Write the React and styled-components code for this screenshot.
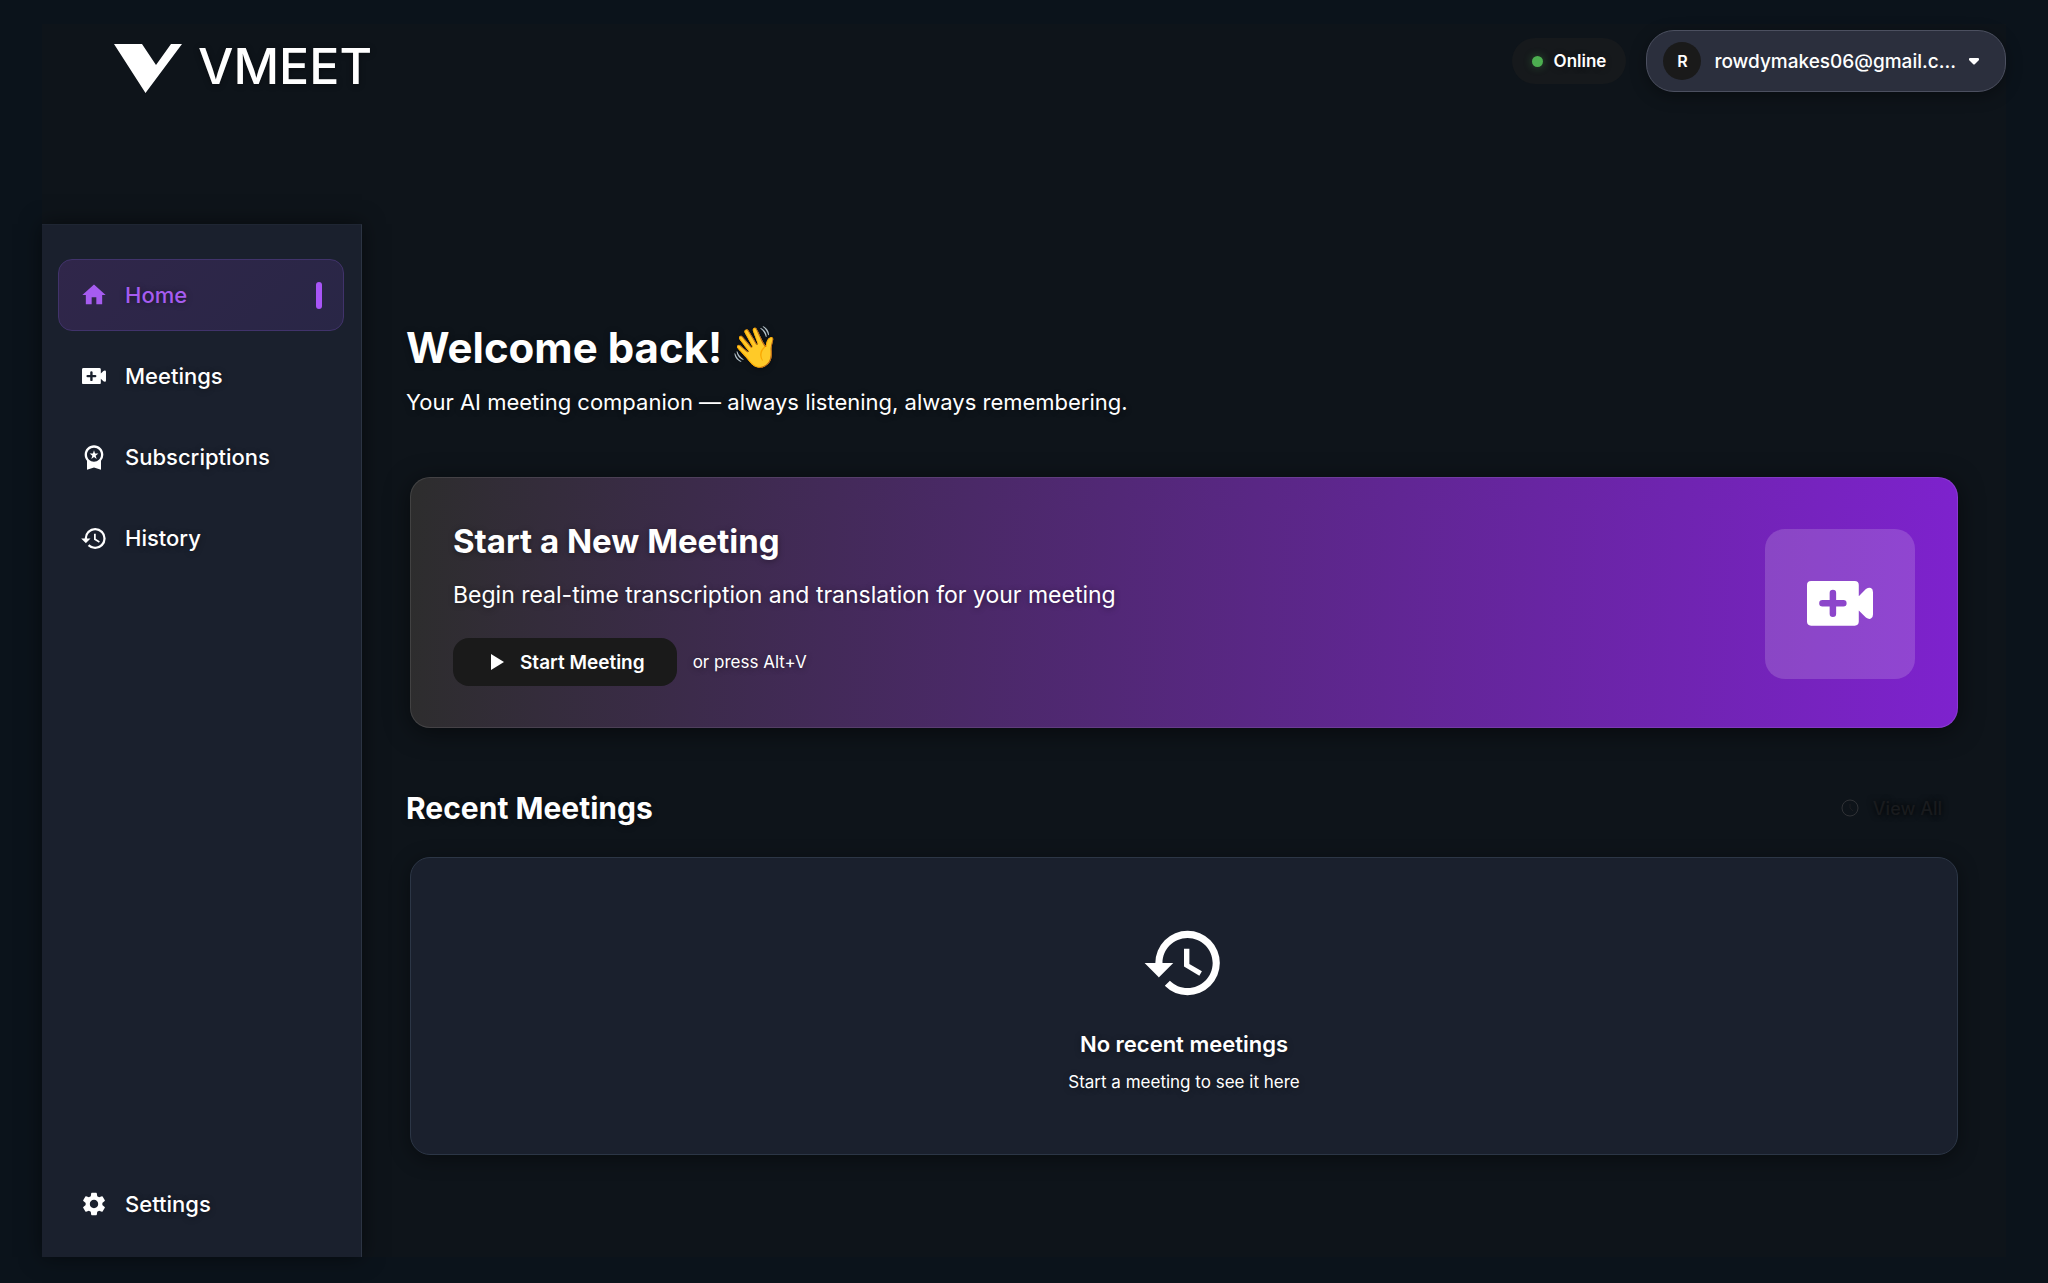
import React from "react";
import styled, { createGlobalStyle, css } from "styled-components";
import { MdHistory, MdHome, MdSettings, MdWorkspacePremium } from "react-icons/md";

const GlobalStyle = createGlobalStyle`
    * {
        box-sizing: border-box;
    }

    body {
        margin: 0;
        background: #0b131b;
        color: #ffffff;
        font-family: Inter, "Liberation Sans", sans-serif;
    }

    h1, h2, h3, p {
        margin: 0;
    }

    button {
        font-family: inherit;
        cursor: pointer;
    }
`;

const Page = styled.div`
    display: flex;
    min-height: 100vh;
    padding: 24px 42px 26px;
`;

const Shell = styled.div`
    display: flex;
    flex: 1;
    flex-direction: column;
    min-width: 0;
    background: #0e141a;
    text-shadow: 0 1px 6px rgba(0, 0, 0, 0.4);
`;

const Header = styled.header`
    display: flex;
    align-items: flex-start;
    justify-content: space-between;
    min-height: 200px;
    padding: 6px 0 0 72px;
`;

const Logo = styled.a`
    display: flex;
    align-items: flex-start;
    gap: 16px;
    padding-top: 14px;
    color: #ffffff;
    font-size: 50px;
    font-weight: 500;
    line-height: 44px;
    text-decoration: none;
`;

const Account = styled.div`
    display: flex;
    align-items: center;
    gap: 20px;
`;

const Status = styled.div`
    display: flex;
    align-items: center;
    gap: 11px;
    height: 46px;
    padding: 0 20px;
    border-radius: 23px;
    background: #16191c;
    font-size: 17px;
    font-weight: 600;
`;

const StatusDot = styled.span`
    width: 11px;
    height: 11px;
    border-radius: 50%;
    background: #4caf50;
    box-shadow: 0 0 8px rgba(76, 175, 80, 0.4);
`;

const UserButton = styled.button`
    display: flex;
    align-items: center;
    gap: 13px;
    height: 62px;
    padding: 0 26px 0 16px;
    border: 1px solid #4c5060;
    border-radius: 28px;
    background: #2b2f3d;
    box-shadow: 0 4px 16px rgba(0, 0, 0, 0.35);
    color: #ffffff;
    font-size: 19px;
    font-weight: 500;
`;

const Avatar = styled.span`
    display: flex;
    align-items: center;
    justify-content: center;
    width: 38px;
    height: 38px;
    border-radius: 50%;
    background: #1a1a1a;
    font-size: 16px;
    font-weight: 600;
`;

const Body = styled.div`
    display: flex;
    flex: 1;
`;

const Sidebar = styled.nav`
    display: flex;
    flex-direction: column;
    flex: none;
    gap: 9px;
    width: 320px;
    padding: 34px 17px 17px 16px;
    border-top: 1px solid #1f2633;
    border-right: 1px solid #2c3443;
    background: #1a202d;
    box-shadow: 0 0 20px rgba(0, 0, 0, 0.5);
`;

const NavItem = styled.button`
    display: flex;
    align-items: center;
    gap: 17px;
    height: 72px;
    padding: 0 21px;
    border: 1px solid transparent;
    border-radius: 14px;
    background: transparent;
    color: #ffffff;
    font-size: 22px;
    font-weight: 500;
    text-align: left;
    text-shadow: inherit;

    ${({ $active }) => $active && css`
        border-color: #41336b;
        background: linear-gradient(135deg, #30264a, #292646);
        color: #a65cf0;
    `}

    ${({ $last }) => $last && css`
        margin-top: auto;
    `}
`;

const ActiveBar = styled.span`
    width: 6px;
    height: 27px;
    margin-left: auto;
    border-radius: 3px;
    background: #a855f7;
`;

const IconBox = styled.span`
    display: flex;
    align-items: center;
    justify-content: center;
    width: 28px;
`;

const Main = styled.main`
    flex: 1;
    min-width: 0;
    padding: 98px 44px 0;
`;

const Title = styled.h1`
    display: flex;
    align-items: center;
    gap: 8px;
    font-size: 42px;
    font-weight: 700;
    line-height: 52px;
`;

const Wave = styled.span`
    font-size: 40px;
    font-family: "Noto Color Emoji", sans-serif;
`;

const Lead = styled.p`
    margin-top: 12px;
    font-size: 22px;
    line-height: 32px;
`;

const Hero = styled.section`
    display: flex;
    align-items: center;
    justify-content: space-between;
    margin: 59px 4px 0;
    padding: 43px 42px 41px;
    border: 1px solid rgba(255, 255, 255, 0.1);
    border-radius: 20px;
    background: linear-gradient(92deg, #2d2d2d 0%, #7e22ce 100%) border-box;
    box-shadow: 0 4px 24px rgba(0, 0, 0, 0.5);
`;

const HeroTitle = styled.h2`
    font-size: 33px;
    font-weight: 700;
    line-height: 40px;
`;

const HeroText = styled.p`
    margin-top: 18px;
    font-size: 23px;
    line-height: 32px;
`;

const HeroActions = styled.div`
    display: flex;
    align-items: center;
    gap: 16px;
    margin-top: 27px;
    font-size: 17px;
`;

const StartButton = styled.button`
    display: flex;
    align-items: center;
    justify-content: center;
    gap: 16px;
    height: 48px;
    padding: 0 32px 0 38px;
    border: 0;
    border-radius: 16px;
    background: #1a1a1a;
    color: #ffffff;
    font-size: 19px;
    font-weight: 600;
`;

const HeroTile = styled.div`
    display: flex;
    align-items: center;
    justify-content: center;
    width: 150px;
    height: 150px;
    border-radius: 20px;
    background: rgba(255, 255, 255, 0.16);
`;

const SectionHeader = styled.div`
    display: flex;
    align-items: center;
    justify-content: space-between;
    margin-top: 60px;
    padding-right: 20px;
`;

const SectionTitle = styled.h2`
    font-size: 30px;
    font-weight: 700;
    line-height: 40px;
`;

const ViewAll = styled.button`
    display: flex;
    align-items: center;
    gap: 14px;
    padding: 0;
    border: 0;
    background: transparent;
    color: #191b1e;
    font-size: 18px;
    font-weight: 500;
    text-shadow: 0 0 6px #000000;
`;

const Empty = styled.section`
    display: flex;
    flex-direction: column;
    align-items: center;
    margin: 29px 4px 0;
    padding: 62px 0 60px;
    border: 1px solid #2c3646;
    border-radius: 20px;
    background: #1a202d;
    box-shadow: 0 4px 20px rgba(0, 0, 0, 0.4);
`;

const EmptyTitle = styled.h3`
    margin-top: 22px;
    font-size: 22px;
    font-weight: 600;
    line-height: 32px;
`;

const EmptyText = styled.p`
    margin-top: 10px;
    font-size: 17px;
    line-height: 24px;
`;

const VideoPlusIcon = ({ width }) => (
    <svg width={width} viewBox="0 0 65 44" fill="currentColor" aria-hidden="true">
        <path
            fillRule="evenodd"
            d="M4 0H47Q51 0 51 4V15L58 8Q61 6 63 7Q65 8 65 11V33Q65 36 63 37Q61 38 58 36L51 29V40Q51 44 47 44H4Q0 44 0 40V4Q0 0 4 0ZM25.500 8.500Q22.300 8.500 22.300 11.700V18.800H15.200Q12 18.800 12 22T15.200 25.200H22.300V32.300Q22.300 35.500 25.500 35.500T28.700 32.300V25.200H35.800Q39 25.200 39 22T35.800 18.800H28.700V11.700Q28.700 8.500 25.500 8.500Z"
        />
    </svg>
);

const navItems = [
    { label: "Home", icon: <MdHome size={28} />, active: true },
    { label: "Meetings", icon: <VideoPlusIcon width={24} /> },
    { label: "Subscriptions", icon: <MdWorkspacePremium size={30} /> },
    { label: "History", icon: <MdHistory size={29} /> },
    { label: "Settings", icon: <MdSettings size={30} />, last: true },
];

const TopBar = () => (
    <Header>
        <Logo href="#home">
            <svg width="68" height="49" viewBox="0 0 68 49" fill="#ffffff" aria-hidden="true">
                <path d="M0 0H28L42 21L57 0H68L31.500 49Z" />
            </svg>
            VMEET
        </Logo>
        <Account>
            <Status>
                <StatusDot />
                Online
            </Status>
            <UserButton type="button">
                <Avatar>R</Avatar>
                rowdymakes06@gmail.c...
                <svg width="10" height="7" viewBox="0 0 10 7" fill="#ffffff" aria-hidden="true">
                    <path d="M1 0H9Q10 0 10 1V2L6 6Q5 7 4 6L0 2V1Q0 0 1 0Z" />
                </svg>
            </UserButton>
        </Account>
    </Header>
);

const App = () => {
    const renderNavItem = ({ label, icon, active, last }) => (
        <NavItem
            key={label}
            type="button"
            $active={active}
            $last={last}
            aria-current={active ? "page" : undefined}
        >
            <IconBox>{icon}</IconBox>
            {label}
            {active && <ActiveBar />}
        </NavItem>
    );

    return (
        <Page>
            <GlobalStyle />
            <Shell>
                <TopBar />
                <Body>
                    <Sidebar>{navItems.map(renderNavItem)}</Sidebar>
                    <Main>
                        <Title>
                            Welcome back!
                            <Wave>👋</Wave>
                        </Title>
                        <Lead>Your AI meeting companion — always listening, always remembering.</Lead>

                        <Hero>
                            <div>
                                <HeroTitle>Start a New Meeting</HeroTitle>
                                <HeroText>Begin real-time transcription and translation for your meeting</HeroText>
                                <HeroActions>
                                    <StartButton type="button">
                                        <svg width="13" height="16" viewBox="0 0 13 16" fill="#ffffff" aria-hidden="true">
                                            <path d="M0 0L13 8L0 16Z" />
                                        </svg>
                                        Start Meeting
                                    </StartButton>
                                    or press Alt+V
                                </HeroActions>
                            </div>
                            <HeroTile>
                                <VideoPlusIcon width={66} />
                            </HeroTile>
                        </Hero>

                        <SectionHeader>
                            <SectionTitle>Recent Meetings</SectionTitle>
                            <ViewAll type="button">
                                <svg width="18" height="18" viewBox="0 0 18 18" fill="none" stroke="#303236" aria-hidden="true">
                                    <circle cx="9" cy="9" r="8" />
                                    <path d="M9 5V9L12 12" stroke="#1c1d20" />
                                </svg>
                                View All
                            </ViewAll>
                        </SectionHeader>

                        <Empty>
                            <MdHistory size={86} />
                            <EmptyTitle>No recent meetings</EmptyTitle>
                            <EmptyText>Start a meeting to see it here</EmptyText>
                        </Empty>
                    </Main>
                </Body>
            </Shell>
        </Page>
    );
};

export default App;
